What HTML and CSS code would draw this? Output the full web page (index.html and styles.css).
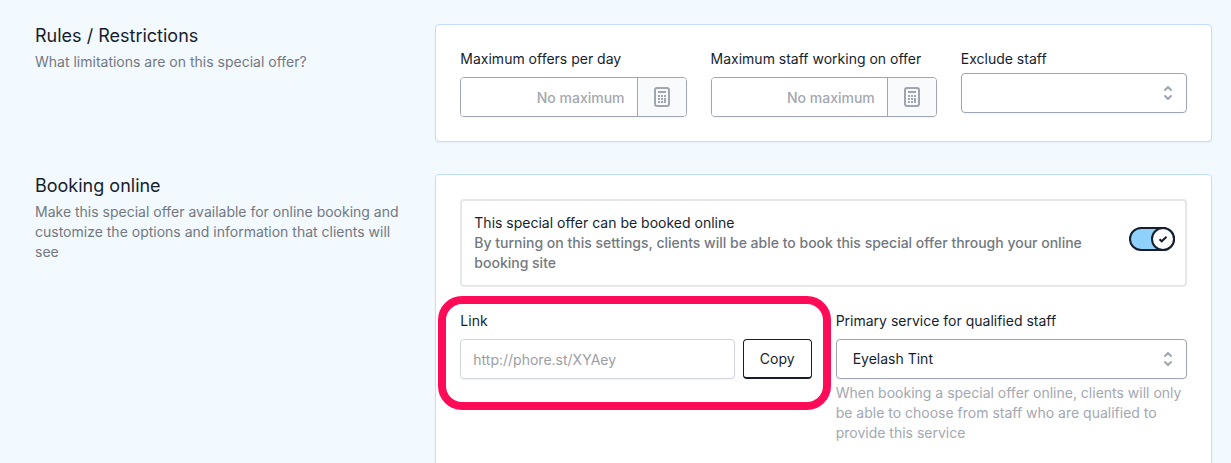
FILE: index.html
```html
<!DOCTYPE html>
<html lang="en">

<head>
    <meta charset="UTF-8">
    <meta name="viewport" content="width=device-width, initial-scale=1.0">
    <title>Special offer</title>
    <link rel="stylesheet" href="styles.css">
</head>

<body>
    <main class="page">
        <section class="section">
            <div class="section-intro">
                <h2>Rules / Restrictions</h2>
                <p>What limitations are on this special offer?</p>
            </div>
            <div class="card">
                <div class="fields fields-three">
                    <div class="field">
                        <label for="maxOffers">Maximum offers per day</label>
                        <div class="number-group">
                            <input type="text" inputmode="numeric" id="maxOffers" placeholder="No maximum">
                            <span class="addon">
                                <svg class="icon-calculator" viewBox="0 0 16 20" aria-hidden="true">
                                    <rect x="1" y="1" width="14" height="18" rx="2" fill="none" stroke="currentColor" stroke-width="2"/>
                                    <path d="M4 4h8v2H4zM4 8h2v2H4zM7 8h2v2H7zM10 8h2v2h-2zM4 11h2v2H4zM7 11h2v2H7zM4 14h2v2H4zM7 14h2v2H7zM10 11h2v5h-2z" fill="currentColor"/>
                                </svg>
                            </span>
                        </div>
                    </div>
                    <div class="field">
                        <label for="maxStaff">Maximum staff working on offer</label>
                        <div class="number-group">
                            <input type="text" inputmode="numeric" id="maxStaff" placeholder="No maximum">
                            <span class="addon">
                                <svg class="icon-calculator" viewBox="0 0 16 20" aria-hidden="true">
                                    <rect x="1" y="1" width="14" height="18" rx="2" fill="none" stroke="currentColor" stroke-width="2"/>
                                    <path d="M4 4h8v2H4zM4 8h2v2H4zM7 8h2v2H7zM10 8h2v2h-2zM4 11h2v2H4zM7 11h2v2H7zM4 14h2v2H4zM7 14h2v2H7zM10 11h2v5h-2z" fill="currentColor"/>
                                </svg>
                            </span>
                        </div>
                    </div>
                    <div class="field field-tight">
                        <label for="excludeStaff">Exclude staff</label>
                        <div class="select-group">
                            <select id="excludeStaff">
                                <option value=""></option>
                            </select>
                            <svg class="icon-selector" viewBox="0 0 20 20" aria-hidden="true">
                                <path d="M7 7l3-3 3 3M7 13l3 3 3-3"/>
                            </svg>
                        </div>
                    </div>
                </div>
            </div>
        </section>

        <section class="section">
            <div class="section-intro">
                <h2>Booking online</h2>
                <p>Make this special offer available for online booking and customize the options and information that clients will see</p>
            </div>
            <div class="card">
                <div class="setting">
                    <div class="setting-text">
                        <label for="bookOnline">This special offer can be booked online</label>
                        <p>By turning on this settings, clients will be able to book this special offer through your online booking site</p>
                    </div>
                    <div class="toggle">
                        <input type="checkbox" id="bookOnline" checked>
                        <span class="toggle-knob">
                            <svg viewBox="0 0 12 12" aria-hidden="true">
                                <path d="M2.5 6.2l2.2 2.1 4.8-4.5"/>
                            </svg>
                        </span>
                    </div>
                </div>
                <div class="fields fields-two">
                    <div class="field field-marked">
                        <label for="link">Link</label>
                        <div class="link-row">
                            <input type="text" id="link" value="http://phore.st/XYAey" readonly>
                            <button type="button" class="copy-button">Copy</button>
                        </div>
                    </div>
                    <div class="field">
                        <label for="primaryService">Primary service for qualified staff</label>
                        <div class="select-group">
                            <select id="primaryService">
                                <option>Eyelash Tint</option>
                            </select>
                            <svg class="icon-selector" viewBox="0 0 20 20" aria-hidden="true">
                                <path d="M7 7l3-3 3 3M7 13l3 3 3-3"/>
                            </svg>
                        </div>
                        <p class="help">When booking a special offer online, clients will only be able to choose from staff who are qualified to provide this service</p>
                    </div>
                </div>
            </div>
        </section>
    </main>
</body>
</html>
```

FILE: styles.css
```css
* {
    box-sizing: border-box;
}

html {
    scrollbar-width: none;
}

body {
    margin: 0;
    background-color: #f2f9ff;
    color: #161e2e;
    font-family: Inter, sans-serif;
    font-size: 14px;
    line-height: 20px;
}

h2,
p {
    margin: 0;
}

input,
select,
button {
    font: inherit;
    color: inherit;
}

.page {
    display: flex;
    flex-direction: column;
    gap: 32px;
    padding: 24px 19px 24px 35px;
}

.section {
    display: grid;
    gap: 24px;
}

/* the card spans two of three equal columns */
@media (min-width: 768px) {
    .section {
        grid-template-columns: repeat(3, minmax(0, 1fr));
    }

    .section .card {
        grid-column: span 2;
    }
}

.section-intro h2 {
    font-size: 18px;
    font-weight: 400;
    line-height: 24px;
    margin-bottom: 4px;
}

.section-intro p {
    color: #73787f;
}

.card {
    background-color: #fff;
    border: 1px solid #c3ddfd;
    border-radius: 4px;
    padding: 24px;
    box-shadow: 0 1px 2px rgba(0, 0, 0, 0.05);
}

.fields {
    display: grid;
    gap: 24px;
    align-items: start;
}

.fields-three {
    grid-template-columns: repeat(3, minmax(0, 1fr));
}

.fields-two {
    grid-template-columns: repeat(2, minmax(0, 1fr));
}

.field label {
    display: block;
    margin-bottom: 8px;
}

.field-tight label {
    margin-bottom: 4px;
}

.number-group {
    display: flex;
    height: 40px;
    border: 1px solid #9fa6b2;
    border-radius: 4px;
    overflow: hidden;
    box-shadow: 0 1px 2px rgba(0, 0, 0, 0.05);
}

.number-group input {
    flex: 1;
    min-width: 0;
    border: none;
    padding: 2px 12px 0;
    text-align: right;
    font-weight: 500;
}

.number-group input::placeholder {
    color: #a3a7b0;
    opacity: 1;
}

.addon {
    display: flex;
    align-items: center;
    justify-content: center;
    width: 49px;
    border-left: 1px solid #9fa6b2;
    background-color: #f9fafb;
    color: #9fa6b2;
}

.icon-calculator {
    width: 16px;
    height: 20px;
}

.select-group {
    position: relative;
}

.select-group select {
    display: block;
    width: 100%;
    height: 40px;
    padding: 0 40px 0 16px;
    border: 1px solid #9fa6b2;
    border-radius: 4px;
    background-color: #fff;
    appearance: none;
    box-shadow: 0 1px 2px rgba(0, 0, 0, 0.05);
}

.icon-selector {
    position: absolute;
    top: 10px;
    right: 9px;
    width: 20px;
    height: 20px;
    fill: none;
    stroke: #9fa6b2;
    stroke-width: 2;
    stroke-linecap: round;
    stroke-linejoin: round;
    pointer-events: none;
}

.setting {
    display: flex;
    align-items: center;
    justify-content: space-between;
    gap: 32px;
    margin-bottom: 24px;
    padding: 12px 10px 12px 12px;
    border: 2px solid #e5e7eb;
    border-radius: 4px;
}

.setting-text p {
    color: #73787f;
    font-weight: 500;
}

.toggle {
    position: relative;
    flex: none;
    width: 46px;
    height: 24px;
    margin-bottom: 8px;
}

.toggle input {
    display: block;
    width: 100%;
    height: 100%;
    margin: 0;
    border: 2px solid #161e2e;
    border-radius: 12px;
    background-color: #fff;
    appearance: none;
    cursor: pointer;
}

.toggle input:checked {
    background-color: #8fd1fb;
}

.toggle-knob {
    position: absolute;
    top: 0;
    left: 0;
    display: flex;
    align-items: center;
    justify-content: center;
    width: 24px;
    height: 24px;
    border: 2px solid #161e2e;
    border-radius: 50%;
    background-color: #fff;
    pointer-events: none;
}

.toggle input:checked + .toggle-knob {
    left: auto;
    right: 0;
}

.toggle-knob svg {
    width: 12px;
    height: 12px;
    fill: none;
    stroke: #161e2e;
    stroke-width: 2;
}

/* highlight drawn around the link field */
.field-marked {
    position: relative;
}

.field-marked::after {
    content: "";
    position: absolute;
    top: -15px;
    right: -19px;
    bottom: -31px;
    left: -22px;
    border: 8px solid #ff0b57;
    border-radius: 24px;
    pointer-events: none;
}

.link-row {
    display: flex;
    gap: 8px;
}

.link-row input {
    flex: 1;
    min-width: 0;
    height: 40px;
    padding: 0 12px;
    border: 1px solid #d2d6dc;
    border-radius: 4px;
    background-color: #fff;
    color: #9b9ea5;
    box-shadow: 0 1px 2px rgba(0, 0, 0, 0.05);
}

.copy-button {
    height: 40px;
    padding: 0 16px;
    border: 1px solid #161e2e;
    border-bottom-width: 2px;
    border-radius: 4px;
    background-color: #fff;
    font-weight: 400;
    cursor: pointer;
}

.help {
    margin-top: 4px;
    color: #a3a7b0;
}
```
